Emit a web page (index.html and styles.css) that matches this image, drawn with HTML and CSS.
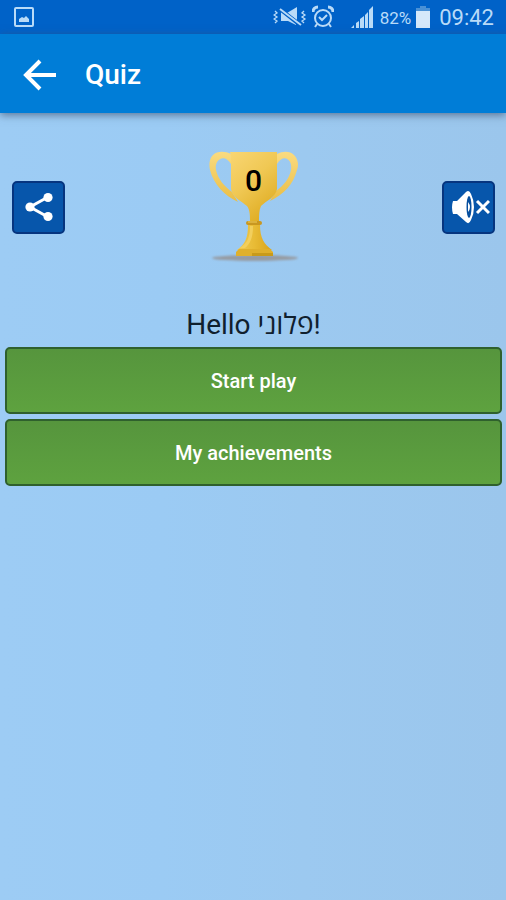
FILE: index.html
```html
<!DOCTYPE html>
<html lang="en">
<head>
<meta charset="utf-8">
<meta name="viewport" content="width=device-width, initial-scale=1">
<title>Quiz</title>
<link rel="stylesheet" href="styles.css">
</head>
<body>
<div class="status">
  <svg class="status-picture" width="20" height="20" viewBox="0 0 20 20" aria-hidden="true">
    <rect x="1" y="1" width="18" height="18" rx="1" fill="none" stroke="currentColor" stroke-width="2"/>
    <path d="M5 15v-3l3-2 2 1 2-2 3 3v3z" fill="currentColor"/>
  </svg>
  <div class="status-group">
    <svg width="34" height="22" viewBox="0 0 34 22" aria-hidden="true">
      <path d="M2 5l2 2-3 2 3 2-3 2 3 2-2 2M31 5l-2 2 3 2-3 2 3 2-3 2 2 2" fill="none" stroke="currentColor" stroke-width="1.3"/>
      <path d="M8 6l15 11v2l-8-4H8z" fill="currentColor"/>
      <path d="M14 7l10-6v13z" fill="currentColor"/>
      <path d="M7 3l20 16" fill="none" stroke="#0062c8" stroke-width="4"/>
      <path d="M7 3l21 16" fill="none" stroke="currentColor" stroke-width="2"/>
    </svg>
    <svg class="status-alarm" width="22" height="24" viewBox="0 0 22 24" aria-hidden="true">
      <g fill="none" stroke="currentColor">
        <circle cx="11" cy="13" r="8" stroke-width="2"/>
        <path d="M7 12l3 3 5-5" stroke-width="2"/>
        <path d="M1 7c0-3 2-5 5-5M21 7c0-3-2-5-5-5" stroke-width="3"/>
        <path d="M5 19l-2 3M17 19l2 3" stroke-width="2"/>
      </g>
    </svg>
    <svg class="status-signal" width="24" height="22" viewBox="0 0 24 22" fill="currentColor" aria-hidden="true">
      <path d="M1 22l3-3v3zM6 17l3-2v7H6zM10 13l4-3v12h-4zM15 9l3-3v16h-3zM19 4l4-4v22h-4z"/>
    </svg>
    <span class="status-percent">82%</span>
    <svg width="16" height="22" viewBox="0 0 16 22" aria-hidden="true">
      <path d="M5 0h6v2h4v4H1V2h4z" fill="#4a91d6"/>
      <path d="M1 5h14v17H1z" fill="#d5e8fa"/>
    </svg>
    <span class="status-time">09:42</span>
  </div>
</div>
<header class="appbar">
  <button class="back" type="button" aria-label="Back">
    <svg width="34" height="32" viewBox="0 0 34 32" aria-hidden="true">
      <path d="M33 16H3M17 2L3 16l14 14" fill="none" stroke="currentColor" stroke-width="4"/>
    </svg>
  </button>
  <h1 class="title">Quiz</h1>
</header>
<main class="content">
  <div class="hero">
    <button class="tool" type="button" aria-label="Share">
      <svg width="30" height="32" viewBox="0 0 30 32" aria-hidden="true">
        <path d="M24 6L6 16l18 10" fill="none" stroke="currentColor" stroke-width="3"/>
        <g fill="currentColor"><circle cx="6" cy="16" r="4.6"/><circle cx="24" cy="6.5" r="4.6"/><circle cx="24" cy="25.5" r="4.6"/></g>
      </svg>
    </button>
    <div class="trophy">
      <svg width="90" height="112" viewBox="0 0 90 112" aria-hidden="true">
        <defs>
          <linearGradient id="cup" x1="0" y1="0" x2="0.6" y2="1">
            <stop offset="0" stop-color="#f9d673"/><stop offset="0.5" stop-color="#f0c854"/><stop offset="1" stop-color="#e0ae25"/>
          </linearGradient>
          <linearGradient id="foot" x1="0" y1="0" x2="1" y2="0">
            <stop offset="0" stop-color="#efcb55"/><stop offset="0.5" stop-color="#e8bb35"/><stop offset="1" stop-color="#d9a41c"/>
          </linearGradient>
          <linearGradient id="handle" x1="0" y1="0" x2="0" y2="1">
            <stop offset="0" stop-color="#fadb80"/><stop offset="1" stop-color="#eabe45"/>
          </linearGradient>
          <filter id="soft" x="-10%" y="-50%" width="120%" height="200%"><feGaussianBlur stdDeviation="1"/></filter>
        </defs>
        <ellipse cx="46" cy="107" rx="43" ry="3" fill="#969ba3" filter="url(#soft)"/>
        <path fill="url(#handle)" d="M22 3C16 0 8 0 4 4C0 8 0 14 1 19C5 34 15 44 29 51L23 41C15 35 9 28 7 19C5 8 16 2 22 13Z"/>
        <path fill="url(#handle)" d="M68 3C74 0 81 0 85 4C89 8 90 14 88 19C84 34 75 43 61 50L67 40C75 34 80 28 82 19C84 8 74 2 68 13Z"/>
        <path fill="url(#cup)" d="M21 1H68V38C67 46 57 50 52 55C50 59 50 65 50 70H41C41 65 41 59 38 55C32 50 23 46 22 38V5Z"/>
        <path fill="url(#foot)" d="M39 74H51C51 87 55 93 63 99H28C36 93 39 87 39 74Z"/>
        <path fill="#f2cf5d" d="M41 75h3c0 12-3 18-8 22h-5c8-5 10-12 10-22z"/>
        <rect x="37" y="70" width="16" height="4" rx="2" fill="#c99720"/>
        <path d="M39 71h9" stroke="#f0cc58" stroke-width="1"/>
        <path fill="#e0b02c" d="M30 98H61L64 101V105H27V101Z"/>
        <path fill="#c99a1a" d="M43 102H64V105H43Z"/>
      </svg>
      <span class="score">0</span>
    </div>
    <button class="tool" type="button" aria-label="Unmute">
      <svg width="42" height="34" viewBox="0 0 42 34" aria-hidden="true">
        <path d="M5 11h4L18 2Q21-1 23 4Q26 10 26 17T23 30Q21 35 18 32L9 24H5Q3 17 5 11Z" fill="currentColor"/>
        <ellipse cx="21" cy="17" rx="2.5" ry="11" fill="#064f9f"/>
        <path d="M20 12q4 5 0 10z" fill="currentColor"/>
        <path d="M29 11l12 12M41 11L29 23" fill="none" stroke="currentColor" stroke-width="3"/>
      </svg>
    </button>
  </div>
  <p class="hello">Hello פלוני!</p>
  <div class="actions">
    <button class="action" type="button">Start play</button>
    <button class="action" type="button">My achievements</button>
  </div>
</main>
</body>
</html>
```
FILE: styles.css
```css
* {
  box-sizing: border-box;
}

body {
  margin: 0;
  min-height: 100vh;
  display: flex;
  flex-direction: column;
  font-family: Roboto, "Open Sans", "Liberation Sans", sans-serif;
  background: linear-gradient(90deg, #9dccf4, #9bcbf4 32%, #9cc9f0 60%, #9bc6ec);
}

svg {
  display: block;
  flex: none;
}

button {
  padding: 0;
  font-family: inherit;
  cursor: pointer;
}

.status {
  height: 34px;
  padding: 0 12px 0 14px;
  display: flex;
  align-items: center;
  justify-content: space-between;
  background: #0062c8;
  color: #b9dbf8;
}

.status-group {
  display: flex;
  align-items: center;
}

.status-alarm {
  margin-left: 5px;
}

.status-signal {
  margin-left: 16px;
}

.status-percent {
  margin: 2px 4px 0 6px;
  font-size: 17px;
  line-height: 20px;
}

.status-time {
  margin: 2px 0 0 8px;
  font-size: 22px;
  line-height: 28px;
}

.appbar {
  height: 79px;
  padding: 2px 24px 0 23px;
  display: flex;
  align-items: center;
  gap: 28px;
  background: #007dd7;
  color: #fff;
  box-shadow: 0 2px 8px rgba(60, 80, 110, 0.7);
}

.back {
  border: 0;
  background: none;
  color: inherit;
}

.title {
  margin: 0;
  font-size: 28px;
  line-height: 32px;
  font-weight: 500;
}

.content {
  padding: 38px 4px 0 5px;
}

.hero {
  padding: 0 7px;
  display: flex;
  align-items: center;
  justify-content: space-between;
}

.tool {
  width: 53px;
  height: 53px;
  display: flex;
  align-items: center;
  justify-content: center;
  border: 2px solid #06357f;
  border-radius: 5px;
  background: #0756ab;
  color: #fff;
}

.trophy {
  position: relative;
}

.score {
  position: absolute;
  inset: 12px 0 auto;
  font-size: 30px;
  line-height: 36px;
  font-weight: 500;
  text-align: center;
  color: #000;
}

.hello {
  margin: 44px 0 4px;
  font-size: 28px;
  line-height: 36px;
  text-align: center;
  color: #10202e;
}

.actions {
  display: flex;
  flex-direction: column;
  gap: 5px;
}

.action {
  height: 67px;
  border: 2px solid #2f602d;
  border-radius: 5px;
  background: linear-gradient(#56953d, #5ea23f);
  color: #fff;
  font-size: 20px;
  line-height: 24px;
  font-weight: 500;
}
```
